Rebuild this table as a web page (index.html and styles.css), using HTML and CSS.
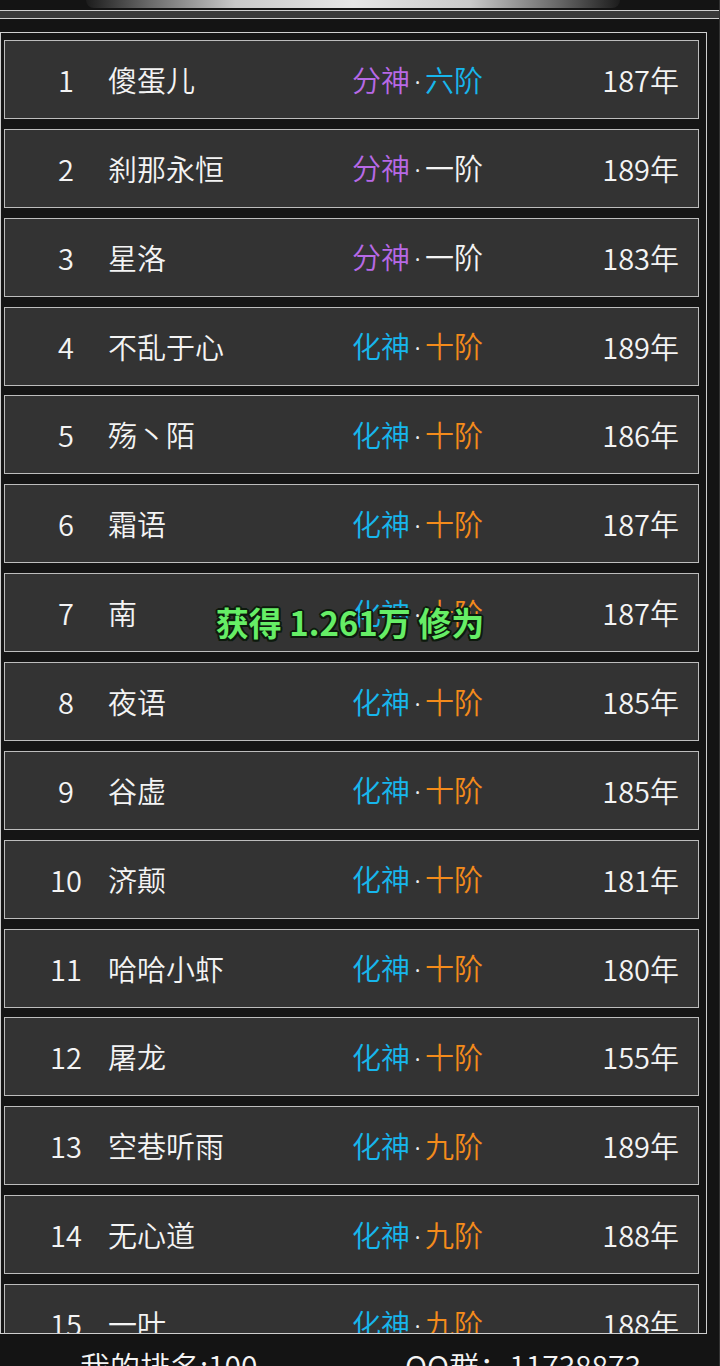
FILE: index.html
```html
<!DOCTYPE html>
<html lang="zh">
<head>
<meta charset="utf-8">
<title>排行榜</title>
<link rel="stylesheet" href="styles.css">
</head>
<body>
<div class="screen">
  <div class="top"><div class="glow"></div></div>
  <div class="tabbar"></div>
  <div class="panel">
    <div class="list">
      <div class="row"><span class="no">1</span><span class="name">傻蛋儿</span><span class="realm"><span class="p">分神</span><span class="dot">·</span><span class="c">六阶</span></span><span class="age">187年</span></div>
      <div class="row"><span class="no">2</span><span class="name">刹那永恒</span><span class="realm"><span class="p">分神</span><span class="dot">·</span><span class="w">一阶</span></span><span class="age">189年</span></div>
      <div class="row"><span class="no">3</span><span class="name">星洛</span><span class="realm"><span class="p">分神</span><span class="dot">·</span><span class="w">一阶</span></span><span class="age">183年</span></div>
      <div class="row"><span class="no">4</span><span class="name">不乱于心</span><span class="realm"><span class="c">化神</span><span class="dot">·</span><span class="o">十阶</span></span><span class="age">189年</span></div>
      <div class="row"><span class="no">5</span><span class="name">殇丶陌</span><span class="realm"><span class="c">化神</span><span class="dot">·</span><span class="o">十阶</span></span><span class="age">186年</span></div>
      <div class="row"><span class="no">6</span><span class="name">霜语</span><span class="realm"><span class="c">化神</span><span class="dot">·</span><span class="o">十阶</span></span><span class="age">187年</span></div>
      <div class="row"><span class="no">7</span><span class="name">南</span><span class="realm"><span class="c">化神</span><span class="dot">·</span><span class="o">十阶</span></span><span class="age">187年</span></div>
      <div class="row"><span class="no">8</span><span class="name">夜语</span><span class="realm"><span class="c">化神</span><span class="dot">·</span><span class="o">十阶</span></span><span class="age">185年</span></div>
      <div class="row"><span class="no">9</span><span class="name">谷虚</span><span class="realm"><span class="c">化神</span><span class="dot">·</span><span class="o">十阶</span></span><span class="age">185年</span></div>
      <div class="row"><span class="no">10</span><span class="name">济颠</span><span class="realm"><span class="c">化神</span><span class="dot">·</span><span class="o">十阶</span></span><span class="age">181年</span></div>
      <div class="row"><span class="no">11</span><span class="name">哈哈小虾</span><span class="realm"><span class="c">化神</span><span class="dot">·</span><span class="o">十阶</span></span><span class="age">180年</span></div>
      <div class="row"><span class="no">12</span><span class="name">屠龙</span><span class="realm"><span class="c">化神</span><span class="dot">·</span><span class="o">十阶</span></span><span class="age">155年</span></div>
      <div class="row"><span class="no">13</span><span class="name">空巷听雨</span><span class="realm"><span class="c">化神</span><span class="dot">·</span><span class="o">九阶</span></span><span class="age">189年</span></div>
      <div class="row"><span class="no">14</span><span class="name">无心道</span><span class="realm"><span class="c">化神</span><span class="dot">·</span><span class="o">九阶</span></span><span class="age">188年</span></div>
      <div class="row"><span class="no">15</span><span class="name">一叶</span><span class="realm"><span class="c">化神</span><span class="dot">·</span><span class="o">九阶</span></span><span class="age">188年</span></div>
    </div>
  </div>
  <div class="footer">
    <span class="mine">我的排名:100</span>
    <span class="qq">QQ群：11738873</span>
  </div>
  <div class="toast">获得 1.261万 修为</div>
</div>
</body>
</html>
```

FILE: styles.css
```css
html, body {
  margin: 0;
  padding: 0;
  background: #141414;
}
.screen {
  position: relative;
  width: 720px;
  height: 1366px;
  overflow: hidden;
  background: #141414;
  font-family: "Noto Sans CJK SC", "Noto Sans", sans-serif;
  color: #f4f4f4;
  box-sizing: border-box;
  border-right: 1px solid #333;
}
.top {
  height: 10px;
  display: flex;
  justify-content: center;
  padding-right: 14px;
  box-sizing: border-box;
}
.glow {
  width: 534px;
  height: 8px;
  border-radius: 0 0 10px 10px;
  background: linear-gradient(to right, #1c1c1c 0%, #6a6a6a 12%, #c9c9c9 28%, #e6e6e6 50%, #c9c9c9 72%, #6a6a6a 88%, #1c1c1c 100%);
}
.tabbar {
  height: 7px;
  background: #3a3a3a;
  border-top: 1px solid #cfcfcf;
  border-bottom: 1px solid #cfcfcf;
  margin-bottom: 13px;
}
.panel {
  width: 707px;
  height: 1302px;
  box-sizing: border-box;
  border: 1px solid #cfcfcf;
  padding: 7px 7px 0 3px;
  overflow: hidden;
  background: #151515;
}
.list {
  display: grid;
  grid-auto-rows: 79px;
  row-gap: 9.86px;
}
.row {
  display: grid;
  grid-template-columns: 72px 238px 1fr auto;
  column-gap: 6px;
  align-items: center;
  box-sizing: border-box;
  background: #333333;
  border: 1px solid #bdbdbd;
  padding: 0 19px 0 25px;
  font-size: 29px;
  font-weight: 350;
  line-height: 1;
}
.no {
  text-align: center;
}
.name {
  white-space: nowrap;
}
.realm {
  white-space: nowrap;
}
.dot {
  font-family: "Noto Sans", "DejaVu Sans", sans-serif;
  color: #ececec;
  padding: 0 4px;
}
.p { color: #b769e6; }
.c { color: #17b6ec; }
.o { color: #f48b1b; }
.w { color: #f4f4f4; }
.age {
  text-align: right;
}
.footer {
  display: grid;
  grid-template-columns: 325px 1fr;
  padding: 10px 0 0 80px;
  font-size: 30px;
  font-weight: 350;
  line-height: 1.4;
  color: #f4f4f4;
}
.toast {
  position: absolute;
  left: 0;
  width: 700px;
  top: 603px;
  text-align: center;
  font-size: 33px;
  font-weight: 700;
  color: #66ee66;
  line-height: 1.2;
  text-shadow:
    2px 0 0 #0d1a0d, -2px 0 0 #0d1a0d, 0 2px 0 #0d1a0d, 0 -2px 0 #0d1a0d,
    1.5px 1.5px 0 #0d1a0d, -1.5px 1.5px 0 #0d1a0d, 1.5px -1.5px 0 #0d1a0d, -1.5px -1.5px 0 #0d1a0d;
}
```
